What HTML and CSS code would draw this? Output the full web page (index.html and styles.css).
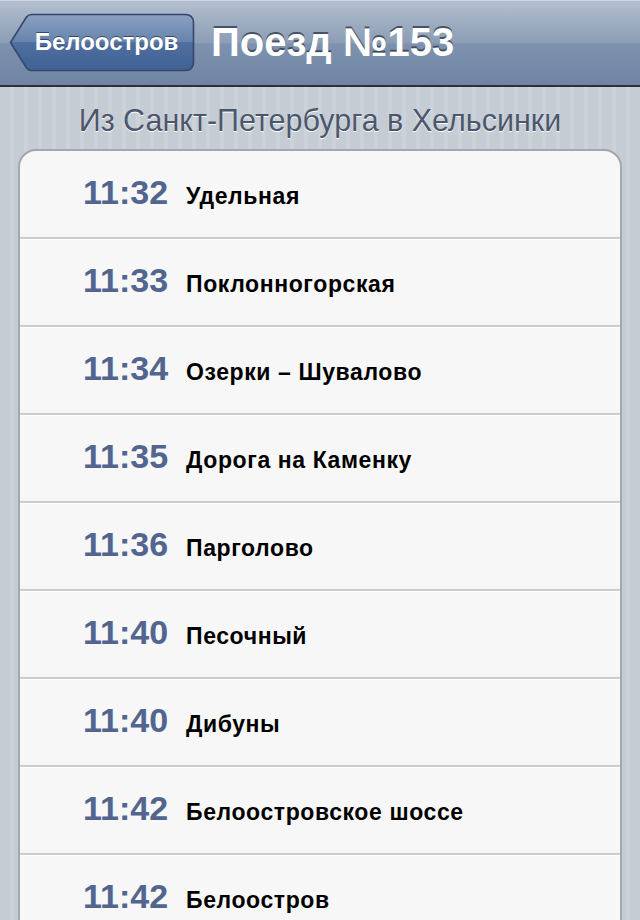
FILE: index.html
```html
<!DOCTYPE html>
<html lang="ru">
<head>
<meta charset="utf-8">
<title>Поезд №153</title>
<link rel="stylesheet" href="styles.css">
</head>
<body>
<header class="navbar">
  <a class="back" href="#">
    <svg class="back-shape" width="186" height="59" viewBox="0 0 186 59">
      <defs>
        <linearGradient id="bg" x1="0" y1="0" x2="0" y2="1">
          <stop offset="0" stop-color="#8ba0c0"/>
          <stop offset="0.5" stop-color="#6683ac"/>
          <stop offset="0.5" stop-color="#4f6f9e"/>
          <stop offset="1" stop-color="#3f6194"/>
        </linearGradient>
      </defs>
      <path d="M1.5,29.5 L17.5,4 Q19.5,1.5 23,1.5 H176 Q184.5,1.5 184.5,10 V49 Q184.5,57.5 176,57.5 H23 Q19.5,57.5 17.5,55 Z" fill="url(#bg)" stroke="#34486b" stroke-width="1.6"/>
    </svg>
    <span class="back-label">Белоостров</span>
  </a>
  <h1 class="title">Поезд №153</h1>
</header>
<main class="content">
  <h2 class="section">Из Санкт-Петербурга в Хельсинки</h2>
  <ul class="card">
    <li class="row"><span class="time">11:32</span><span class="station">Удельная</span></li>
    <li class="row"><span class="time">11:33</span><span class="station">Поклонногорская</span></li>
    <li class="row"><span class="time">11:34</span><span class="station">Озерки – Шувалово</span></li>
    <li class="row"><span class="time">11:35</span><span class="station">Дорога на Каменку</span></li>
    <li class="row"><span class="time">11:36</span><span class="station">Парголово</span></li>
    <li class="row"><span class="time">11:40</span><span class="station">Песочный</span></li>
    <li class="row"><span class="time">11:40</span><span class="station">Дибуны</span></li>
    <li class="row"><span class="time">11:42</span><span class="station">Белоостровское шоссе</span></li>
    <li class="row"><span class="time">11:42</span><span class="station">Белоостров</span></li>
  </ul>
</main>
</body>
</html>
```

FILE: styles.css
```css
* { box-sizing: border-box; }
html, body {
  margin: 0;
  padding: 0;
  height: 920px;
  overflow: hidden;
}
body {
  font-family: "Liberation Sans", Arial, sans-serif;
  background-color: #c5ccd4;
  background-image: repeating-linear-gradient(90deg, #c5ccd4 0px, #c5ccd4 10px, #cbd2d9 10px, #cbd2d9 14px);
}
.navbar {
  height: 87px;
  display: flex;
  align-items: center;
  padding: 0 0 2px 10px;
  gap: 15px;
  background: linear-gradient(#b4c0d0 0%, #9fadc1 25%, #8b9db5 50%, #7e92ae 51%, #6e84a3 100%);
  border-top: 1px solid #cdd5e0;
  border-bottom: 2px solid #2c3039;
}
.back {
  position: relative;
  width: 186px;
  height: 59px;
  display: flex;
  align-items: center;
  justify-content: center;
  padding-left: 7px;
  text-decoration: none;
  flex-shrink: 0;
}
.back-shape {
  position: absolute;
  left: -1px;
  top: 0;
}
.back-label {
  position: relative;
  color: #fff;
  font-weight: bold;
  font-size: 24px;
  text-shadow: 0 -1px 0 rgba(30, 45, 75, 0.7);
}
.title {
  margin: 0;
  color: #fff;
  font-size: 40px;
  font-weight: bold;
  text-shadow: 0 -2px 0 rgba(45, 55, 75, 0.75);
  white-space: nowrap;
}
.content {
  padding: 0 18px;
}
.section {
  margin: 0;
  height: 62px;
  display: flex;
  align-items: center;
  justify-content: center;
  padding-top: 4px;
  font-size: 30.5px;
  font-weight: normal;
  color: #4c566c;
  text-shadow: 0 1px 0 #fff;
  white-space: nowrap;
}
.card {
  list-style: none;
  margin: 0;
  padding: 0;
  background: #f7f7f7;
  border: 2px solid #a3a8b0;
  border-radius: 18px;
}
.row {
  height: 88px;
  display: flex;
  align-items: baseline;
  padding: 22px 0 0 63px;
  border-bottom: 2px solid #cdcdcf;
  box-shadow: 0 1px 0 #fff inset;
}
.row:first-child { box-shadow: none; }
.time {
  font-size: 34px;
  font-weight: bold;
  color: #51658f;
  width: 103px;
}
.station {
  font-size: 23px;
  letter-spacing: 0.6px;
  font-weight: bold;
  color: #000;
}
```
